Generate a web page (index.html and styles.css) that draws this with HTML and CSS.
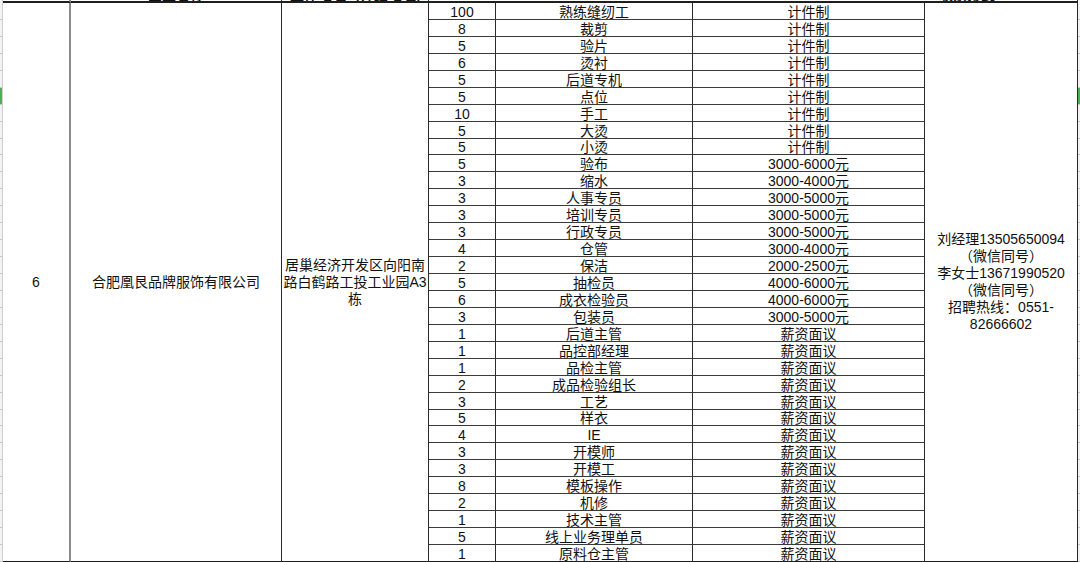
FILE: index.html
```html
<!DOCTYPE html>
<html lang="zh-CN">
<head>
<meta charset="utf-8">
<title>招聘信息</title>
<link rel="stylesheet" href="styles.css">
</head>
<body>
<div class="sheet">
  <div class="strip strip-l">
    <div class="strip-head"></div>
    <div class="tick"></div><div class="tick"></div><div class="tick"></div><div class="tick"></div><div class="tick"></div>
    <div class="tick sel"></div>
    <div class="tick"></div><div class="tick"></div><div class="tick"></div><div class="tick"></div><div class="tick"></div>
    <div class="tick"></div><div class="tick"></div><div class="tick"></div><div class="tick"></div><div class="tick"></div>
    <div class="tick"></div><div class="tick"></div><div class="tick"></div><div class="tick"></div><div class="tick"></div>
    <div class="tick"></div><div class="tick"></div><div class="tick"></div><div class="tick"></div><div class="tick"></div>
    <div class="tick"></div><div class="tick"></div><div class="tick"></div><div class="tick"></div><div class="tick"></div>
    <div class="tick"></div><div class="tick"></div>
  </div>

  <div class="col col-a">
    <div class="head"></div>
    <div class="body">6</div>
  </div>

  <div class="col col-b">
    <div class="head"><span class="head-text">企业名称</span></div>
    <div class="body">合肥凰艮品牌服饰有限公司</div>
  </div>

  <div class="col col-c">
    <div class="head"><span class="head-text">工作地址（详细地址）</span></div>
    <div class="body">居巢经济开发区向阳南<br>路白鹤路工投工业园A3<br>栋</div>
  </div>

  <div class="col col-rows">
    <div class="head"></div>
    <div class="rows">
      <div class="row"><div class="c-n">100</div><div class="c-j">熟练缝纫工</div><div class="c-s">计件制</div></div>
      <div class="row"><div class="c-n">8</div><div class="c-j">裁剪</div><div class="c-s">计件制</div></div>
      <div class="row"><div class="c-n">5</div><div class="c-j">验片</div><div class="c-s">计件制</div></div>
      <div class="row"><div class="c-n">6</div><div class="c-j">烫衬</div><div class="c-s">计件制</div></div>
      <div class="row"><div class="c-n">5</div><div class="c-j">后道专机</div><div class="c-s">计件制</div></div>
      <div class="row"><div class="c-n">5</div><div class="c-j">点位</div><div class="c-s">计件制</div></div>
      <div class="row"><div class="c-n">10</div><div class="c-j">手工</div><div class="c-s">计件制</div></div>
      <div class="row"><div class="c-n">5</div><div class="c-j">大烫</div><div class="c-s">计件制</div></div>
      <div class="row"><div class="c-n">5</div><div class="c-j">小烫</div><div class="c-s">计件制</div></div>
      <div class="row"><div class="c-n">5</div><div class="c-j">验布</div><div class="c-s">3000-6000元</div></div>
      <div class="row"><div class="c-n">3</div><div class="c-j">缩水</div><div class="c-s">3000-4000元</div></div>
      <div class="row"><div class="c-n">3</div><div class="c-j">人事专员</div><div class="c-s">3000-5000元</div></div>
      <div class="row"><div class="c-n">3</div><div class="c-j">培训专员</div><div class="c-s">3000-5000元</div></div>
      <div class="row"><div class="c-n">3</div><div class="c-j">行政专员</div><div class="c-s">3000-5000元</div></div>
      <div class="row"><div class="c-n">4</div><div class="c-j">仓管</div><div class="c-s">3000-4000元</div></div>
      <div class="row"><div class="c-n">2</div><div class="c-j">保洁</div><div class="c-s">2000-2500元</div></div>
      <div class="row"><div class="c-n">5</div><div class="c-j">抽检员</div><div class="c-s">4000-6000元</div></div>
      <div class="row"><div class="c-n">6</div><div class="c-j">成衣检验员</div><div class="c-s">4000-6000元</div></div>
      <div class="row"><div class="c-n">3</div><div class="c-j">包装员</div><div class="c-s">3000-5000元</div></div>
      <div class="row"><div class="c-n">1</div><div class="c-j">后道主管</div><div class="c-s">薪资面议</div></div>
      <div class="row"><div class="c-n">1</div><div class="c-j">品控部经理</div><div class="c-s">薪资面议</div></div>
      <div class="row"><div class="c-n">1</div><div class="c-j">品检主管</div><div class="c-s">薪资面议</div></div>
      <div class="row"><div class="c-n">2</div><div class="c-j">成品检验组长</div><div class="c-s">薪资面议</div></div>
      <div class="row"><div class="c-n">3</div><div class="c-j">工艺</div><div class="c-s">薪资面议</div></div>
      <div class="row"><div class="c-n">5</div><div class="c-j">样衣</div><div class="c-s">薪资面议</div></div>
      <div class="row"><div class="c-n">4</div><div class="c-j">IE</div><div class="c-s">薪资面议</div></div>
      <div class="row"><div class="c-n">3</div><div class="c-j">开模师</div><div class="c-s">薪资面议</div></div>
      <div class="row"><div class="c-n">3</div><div class="c-j">开模工</div><div class="c-s">薪资面议</div></div>
      <div class="row"><div class="c-n">8</div><div class="c-j">模板操作</div><div class="c-s">薪资面议</div></div>
      <div class="row"><div class="c-n">2</div><div class="c-j">机修</div><div class="c-s">薪资面议</div></div>
      <div class="row"><div class="c-n">1</div><div class="c-j">技术主管</div><div class="c-s">薪资面议</div></div>
      <div class="row"><div class="c-n">5</div><div class="c-j">线上业务理单员</div><div class="c-s">薪资面议</div></div>
      <div class="row"><div class="c-n">1</div><div class="c-j">原料仓主管</div><div class="c-s">薪资面议</div></div>
    </div>
  </div>

  <div class="col col-g">
    <div class="head"><span class="head-text">联系方式</span></div>
    <div class="body">刘经理13505650094<br>（微信同号）<br>李女士13671990520<br>（微信同号）<br>招聘热线：0551-<br>82666602</div>
  </div>

  <div class="strip strip-r">
    <div class="strip-head"></div>
    <div class="tick"></div><div class="tick"></div><div class="tick"></div><div class="tick"></div><div class="tick"></div>
    <div class="tick sel"></div>
    <div class="tick"></div><div class="tick"></div><div class="tick"></div><div class="tick"></div><div class="tick"></div>
    <div class="tick"></div><div class="tick"></div><div class="tick"></div><div class="tick"></div><div class="tick"></div>
    <div class="tick"></div><div class="tick"></div><div class="tick"></div><div class="tick"></div><div class="tick"></div>
    <div class="tick"></div><div class="tick"></div><div class="tick"></div><div class="tick"></div><div class="tick"></div>
    <div class="tick"></div><div class="tick"></div><div class="tick"></div><div class="tick"></div><div class="tick"></div>
    <div class="tick"></div><div class="tick"></div>
  </div>
</div>
</body>
</html>
```

FILE: styles.css
```css
* { box-sizing: border-box; }

html, body {
  margin: 0;
  padding: 0;
  background: #ffffff;
}

body {
  font-family: "Liberation Sans", "Noto Sans CJK SC", sans-serif;
  font-size: 14px;
  color: #111;
  overflow: hidden;
}

.sheet {
  display: flex;
  width: 1080px;
  height: 562px;
}

/* side strips (row header remnants) */
.strip {
  display: flex;
  flex-direction: column;
  background: #f2f2f2;
}
.strip-l { width: 3px; border-right: 1px solid #d0d0d0; }
.strip-r { width: 2px; }
.strip-head { height: 3px; flex: none; }
.tick {
  flex: 1 1 0;
  min-height: 0;
  border-bottom: 1px solid #c8c8c8;
}
.tick.sel { background: #4caf50; }

/* columns */
.col {
  display: flex;
  flex-direction: column;
}
.head {
  height: 3px;
  flex: none;
  border-bottom: 2px solid #1e1e1e;
  overflow: hidden;
  display: flex;
  align-items: flex-end;
  justify-content: center;
}
.head-text {
  line-height: 14px;
  font-weight: bold;
  margin-bottom: -1px;
  white-space: nowrap;
}

.body {
  flex: 1 1 0;
  min-height: 0;
  display: flex;
  align-items: center;
  justify-content: center;
  text-align: center;
  line-height: 17px;
  border-bottom: 1px solid #1e1e1e;
}

.col-a { width: 68px; }
.col-a .body { border-right: 2px solid #8a8a8a; }
.col-a .head { border-right: 2px solid #8a8a8a; }

.col-b { width: 211px; }
.col-b .body, .col-b .head { border-right: 1px solid #2a2a2a; }

.col-c { width: 147px; }
.col-c .body, .col-c .head { border-right: 1px solid #2a2a2a; }
.col-c .head { justify-content: flex-start; padding-left: 8px; }

.col-rows { width: 496px; }
.rows {
  flex: 1 1 0;
  min-height: 0;
  display: flex;
  flex-direction: column;
}
.row {
  flex: 1 1 0;
  min-height: 0;
  display: flex;
}
.row > div {
  display: flex;
  align-items: center;
  justify-content: center;
  line-height: 14px;
  padding-top: 2px;
  white-space: nowrap;
  border-bottom: 1px solid #3a3a3a;
  border-right: 1px solid #2a2a2a;
}
.row:last-child > div { border-bottom-color: #1e1e1e; }
.c-n { width: 67px; }
.c-j { width: 197px; }
.c-s { width: 232px; }

.col-g { width: 153px; }
.col-g .body, .col-g .head { border-right: 1px solid #2a2a2a; }
.col-g .head { justify-content: flex-start; padding-left: 14px; }
```
